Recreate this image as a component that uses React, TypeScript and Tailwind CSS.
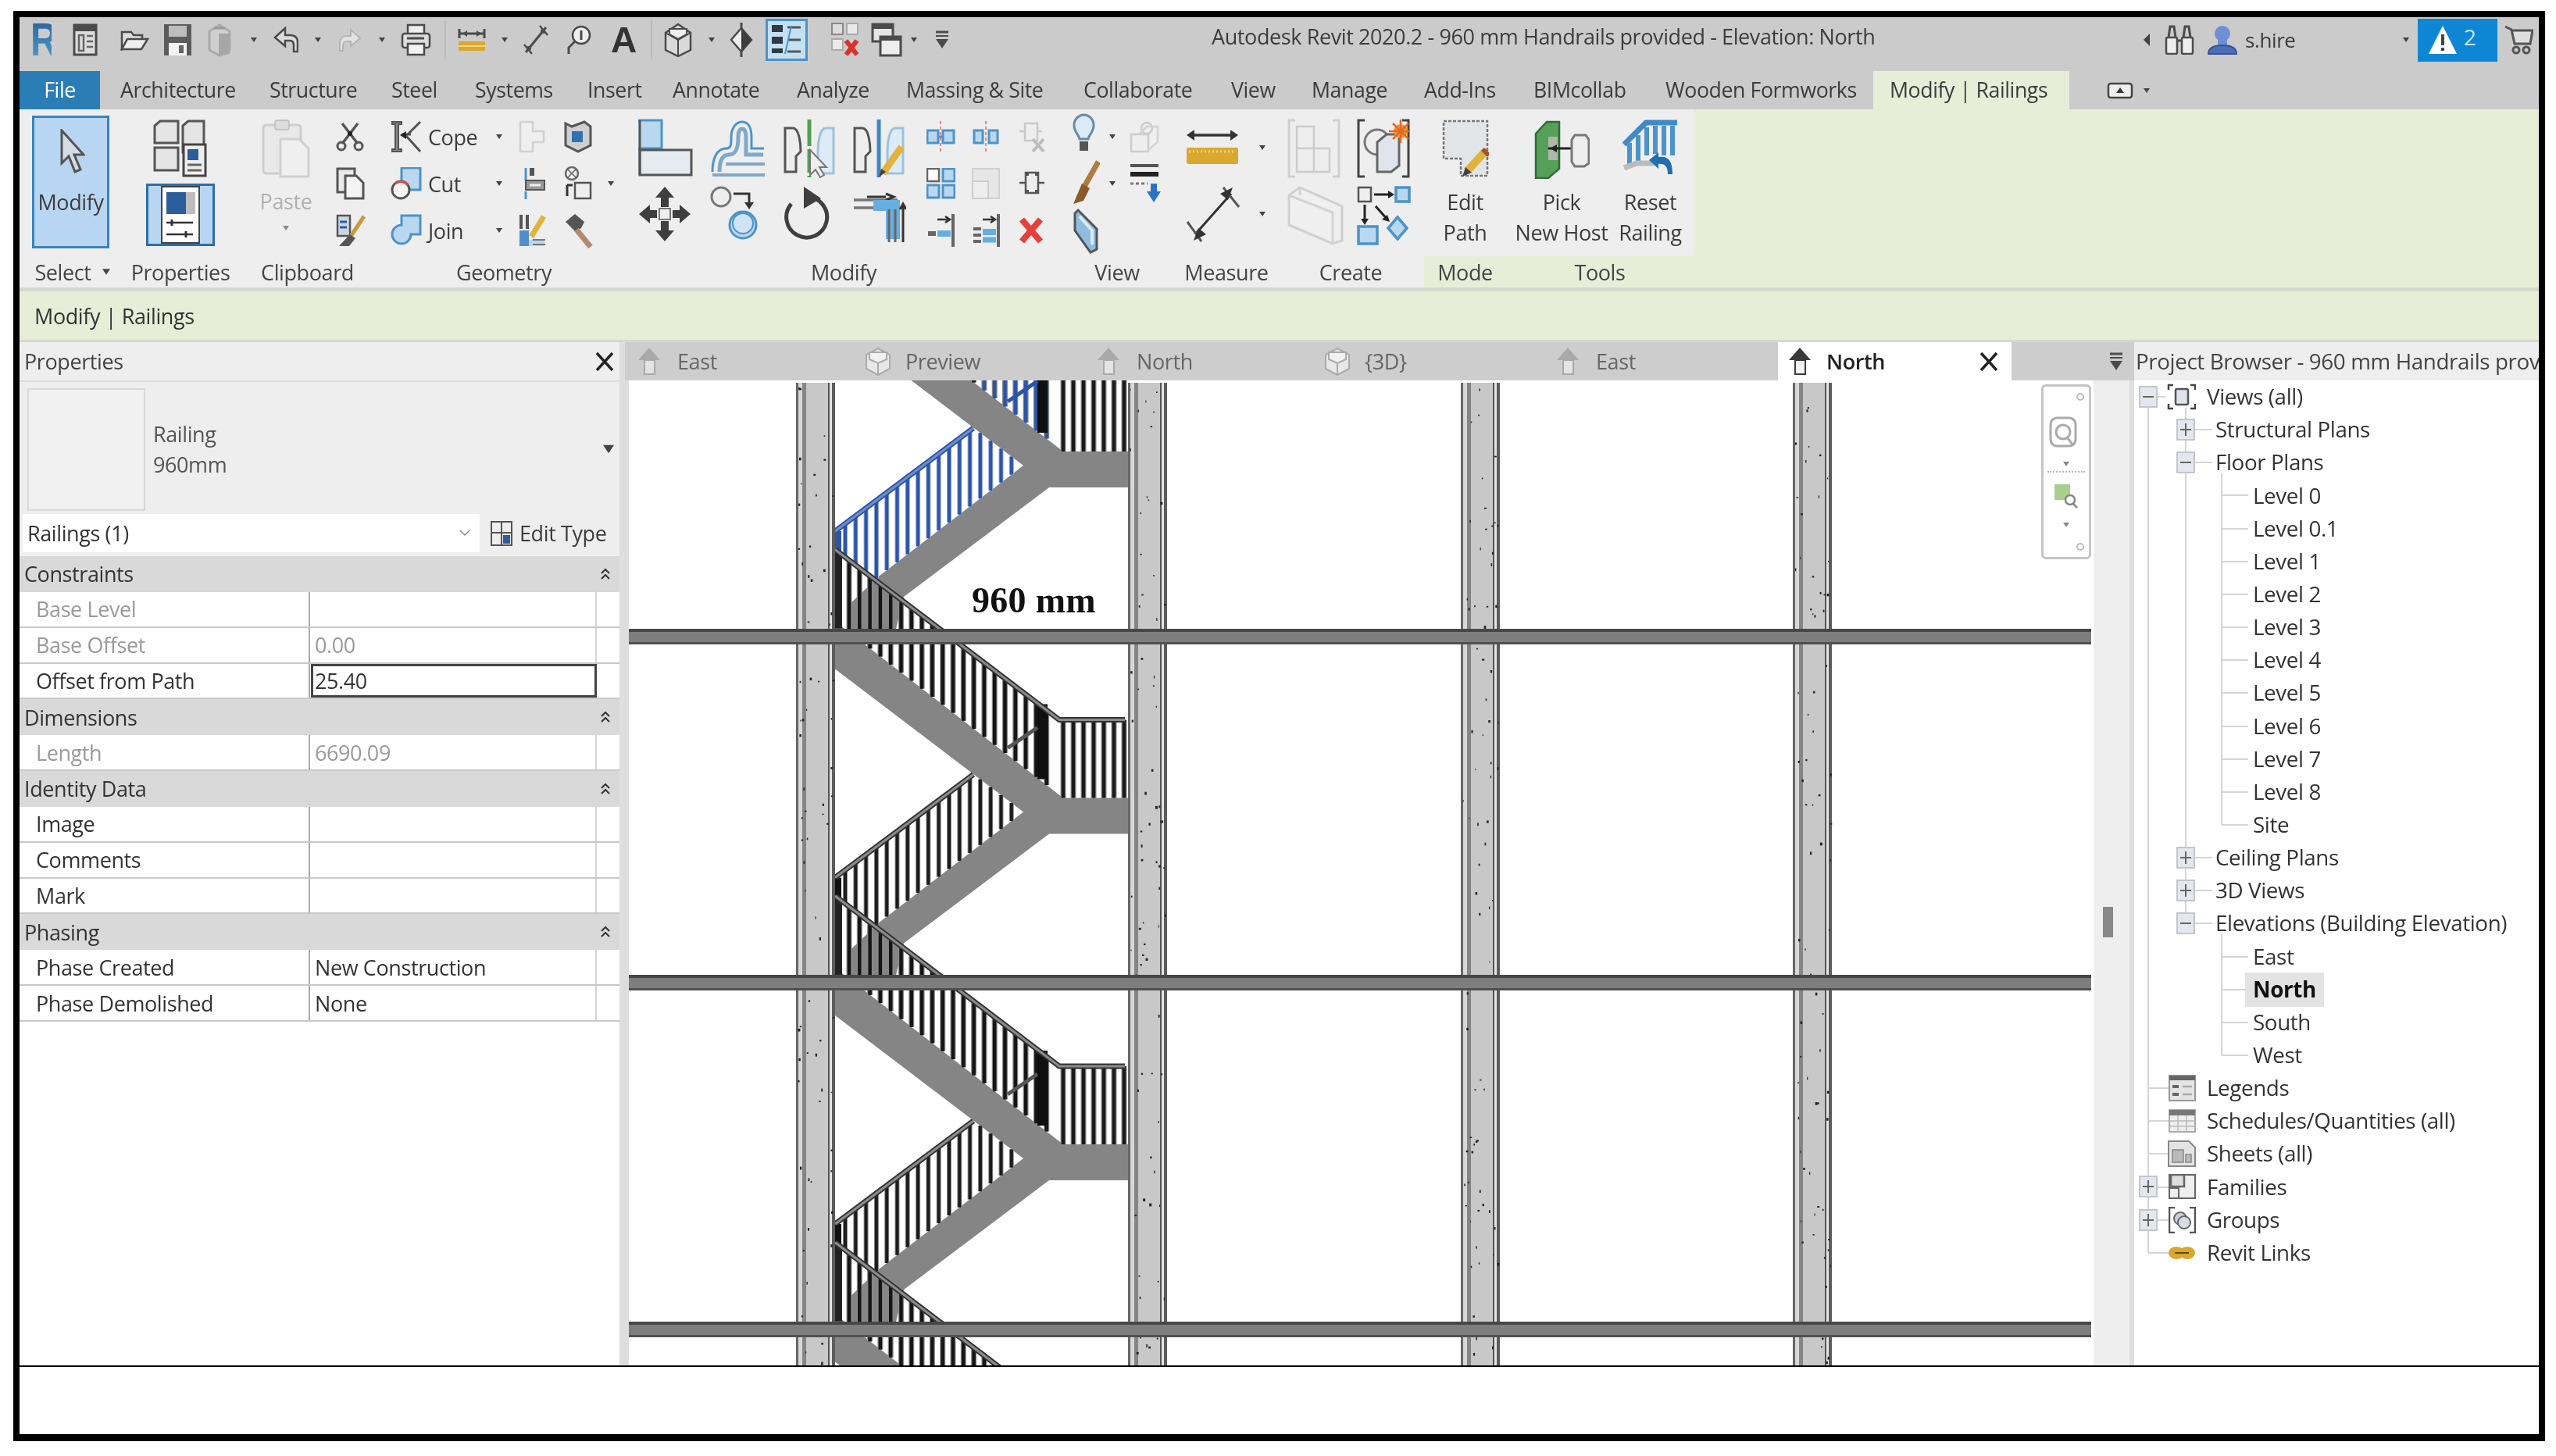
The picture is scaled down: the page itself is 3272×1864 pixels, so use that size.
import React from "react";

type P = { children?: React.ReactNode };
const Sv = ({ w, h, children }: P & { w: number; h: number }) => (
  <svg width={w} height={h} viewBox={`0 0 ${w} ${h}`} className="block shrink-0" fill="none">
    {children}
  </svg>
);
const D = "#4b4b4b";
const B = "#4c93c9";
const L = "#b9d8ef";

const Tri = ({ c = "#444", s = 8 }: { c?: string; s?: number }) => (
  <svg width={s} height={s - 2} viewBox="0 0 8 6" className="block shrink-0">
    <path d="M0 0H8L4 6Z" fill={c} />
  </svg>
);

/* quick access */
const QPanel = () => (<Sv w={32} h={42}><rect x="2" y="2" width="28" height="38" fill="#ddd" stroke={D} strokeWidth="3" /><rect x="2" y="2" width="28" height="8" fill={D} /><path d="M8 15h6v20H8zM18 16h8M18 23h8M18 30h8" stroke="#666" strokeWidth="2.5" /></Sv>);
const QFolder = () => (<Sv w={37} h={28}><path d="M2 4h12l3 4h11v6H9L2 26Z" fill="#ddd" stroke={D} strokeWidth="2.5" /><path d="M9 13h26l-8 13H2Z" fill="#eee" stroke={D} strokeWidth="2.5" /></Sv>);
const QSave = () => (<Sv w={37} h={42}><rect x="1" y="1" width="35" height="40" fill="#5c5c5c" /><rect x="7" y="3" width="23" height="14" fill="#bdbdbd" /><rect x="7" y="25" width="23" height="16" fill="#f2f2f2" /><rect x="20" y="28" width="6" height="10" fill="#666" /></Sv>);
const QSync = () => (<Sv w={34} h={44}><path d="M17 3l13 8v24l-13 7-13-7V11Z" fill="#cfcfcf" stroke="#aaa" strokeWidth="3" /><path d="M16 14h14v26l-14 3Z" fill="#a6a6a6" /><path d="M10 7h14" stroke="#999" strokeWidth="3" /></Sv>);
const QUndo = () => (<Sv w={32} h={34}><path d="M15 2L2 14l13 11v-7h6c4 0 5 3 5 6v8h5V20c0-6-4-9-10-9h-6Z" fill="#ddd" stroke={D} strokeWidth="2.5" /></Sv>);
const QRedo = () => (<Sv w={30} h={30}><path d="M16 2l12 11-12 10v-6h-5c-4 0-5 3-5 6v6H2V19c0-6 4-9 9-9h5Z" fill="#e2e2e2" stroke="#b5b5b5" strokeWidth="2" /></Sv>);
const QPrint = () => (<Sv w={39} h={42}><rect x="9" y="2" width="21" height="12" fill="#eee" stroke={D} strokeWidth="2.5" /><rect x="2" y="13" width="35" height="18" rx="3" fill="#ddd" stroke={D} strokeWidth="2.5" /><rect x="9" y="26" width="21" height="14" fill="#f3f3f3" stroke={D} strokeWidth="2.5" /><path d="M8 19h22" stroke={D} strokeWidth="3" /></Sv>);
const QDim = () => (<Sv w={36} h={32}><path d="M2 8h32M2 2v12M34 2v12" stroke={D} strokeWidth="3" /><path d="M6 8l6-4v8ZM30 8l-6-4v8Z" fill={D} /><rect x="1" y="18" width="34" height="12" fill="#d9a82e" /><path d="M1 24h34" stroke="#f3d77c" strokeWidth="2" /></Sv>);
const QAligned = () => (<Sv w={34} h={40}><path d="M4 36L30 4" stroke={D} strokeWidth="3" /><path d="M2 26l10 12M22 2l10 12" stroke={D} strokeWidth="2.5" /><circle cx="8" cy="31" r="3" fill={D} /><circle cx="26" cy="9" r="3" fill={D} /></Sv>);
const QTag = () => (<Sv w={34} h={40}><circle cx="20" cy="14" r="11" fill="#eee" stroke={D} strokeWidth="2.5" /><path d="M12 22L4 30v8" stroke={D} strokeWidth="3" /><path d="M20 8v12" stroke={D} strokeWidth="3" /></Sv>);
const QHouse = () => (<Sv w={39} h={44}><path d="M19 2l16 11v22l-16 8-16-8V13Z" fill="#d9d9d9" stroke={D} strokeWidth="2.5" /><path d="M3 13l16 9 16-9M19 22v20" stroke={D} strokeWidth="2" /><path d="M8 8h22v7l-11 6-11-6Z" fill="#eee" stroke={D} strokeWidth="2" /></Sv>);
const QDiamond = () => (<Sv w={29} h={46}><path d="M14 1v8M14 37v8" stroke={D} strokeWidth="3" /><path d="M14 8l13 15-13 15L1 23Z" fill="#eee" stroke={D} strokeWidth="2.5" /><path d="M14 8l13 15-13 15Z" fill="#3d3d3d" /></Sv>);
const QThin = () => (<div className="w-[54px] h-[54px] bg-[#c3e0f5] border-[3px] border-[#4c93c9] flex items-center justify-center"><Sv w={42} h={44}><path d="M2 3h14v9H2zM2 18h14v9H2zM2 33h14v6H2z" fill="#2e3a44" /><path d="M22 6h17M22 22h17M22 37h17" stroke="#555" strokeWidth="3" /><path d="M27 4L19 40" stroke={B} strokeWidth="2" /></Sv></div>);
const QSwitch = () => (<Sv w={37} h={46}><rect x="2" y="2" width="14" height="14" fill="#ddd" stroke="#888" strokeWidth="2" /><rect x="21" y="2" width="14" height="14" fill="#e9e9e9" stroke="#aaa" strokeWidth="2" /><rect x="2" y="22" width="14" height="14" fill="#e9e9e9" stroke="#aaa" strokeWidth="2" /><path d="M20 24l14 18M34 24L20 42" stroke="#d7322c" strokeWidth="6" /></Sv>);
const QWin = () => (<Sv w={40} h={44}><rect x="2" y="2" width="26" height="22" fill="#e6e6e6" stroke={D} strokeWidth="3" /><rect x="12" y="18" width="26" height="24" fill="#eee" stroke={D} strokeWidth="3" /><path d="M2 2h26v6H2zM12 18h26v5H12z" fill={D} /></Sv>);
const QCustom = () => (<Sv w={18} h={24}><path d="M1 2h16" stroke={D} strokeWidth="3" /><path d="M1 7h16" stroke={D} strokeWidth="2" /><path d="M1 11h16l-8 12Z" fill={D} /></Sv>);

/* ribbon */
const RCursor = () => (<Sv w={36} h={60}><path d="M6 2v42l9-9 8 20 7-3-8-19h12Z" fill="#d5dde4" stroke="#555" strokeWidth="3" /></Sv>);
const RFamily = () => (<Sv w={70} h={74}><path d="M2 8l7-6h23v28H9v0H2ZM38 8l7-6h20v40H38ZM2 36h30v29H2Z" fill="#e4e4e4" stroke="#555" strokeWidth="3" /><rect x="39" y="32" width="28" height="40" fill="#eee" stroke="#444" strokeWidth="3" /><rect x="44" y="38" width="14" height="14" fill="#2a5f9c" /><path d="M44 58h18M44 65h18" stroke="#666" strokeWidth="3" /></Sv>);
const RPanel = () => (<div className="w-[88px] h-[80px] bg-[#b8d6f1] border-[3px] border-[#2d6ea8] flex justify-center"><Sv w={50} h={74}><rect x="1" y="1" width="48" height="72" fill="#fff" stroke="#444" strokeWidth="2" /><rect x="7" y="8" width="25" height="28" fill="#2a5f9c" /><rect x="32" y="8" width="12" height="28" fill="#bdbdbd" /><path d="M7 47h34M7 62h34" stroke="#333" strokeWidth="2.5" /><path d="M14 43v8M32 58v8" stroke="#333" strokeWidth="3" /></Sv></div>);
const RPaste = () => (<Sv w={62} h={76}><rect x="2" y="8" width="48" height="62" rx="4" fill="#e8e8e8" stroke="#cdcdcd" strokeWidth="3" /><rect x="17" y="2" width="18" height="12" rx="3" fill="#ddd" stroke="#c4c4c4" strokeWidth="2" /><path d="M24 26h24l12 12v36H24Z" fill="#efefef" stroke="#cfcfcf" strokeWidth="3" /></Sv>);
const RScissor = () => (<Sv w={36} h={38}><path d="M8 2l20 26M28 2L8 28" stroke="#555" strokeWidth="3.5" /><circle cx="7" cy="31" r="5" stroke="#555" strokeWidth="3" /><circle cx="29" cy="31" r="5" stroke="#555" strokeWidth="3" /><circle cx="18" cy="15" r="3" fill="#222" /></Sv>);
const RCopy = () => (<Sv w={37} h={42}><rect x="2" y="2" width="22" height="30" fill="#e9e9e9" stroke="#555" strokeWidth="3" /><path d="M12 11h14l9 9v20H12Z" fill="#f3f3f3" stroke="#555" strokeWidth="3" /></Sv>);
const RBrush = () => (<Sv w={38} h={42}><rect x="2" y="2" width="16" height="26" fill="#ccd6e0" stroke="#555" strokeWidth="2.5" /><path d="M5 10h9M5 17h9" stroke="#2a5f9c" strokeWidth="3" /><path d="M36 3L18 30" stroke="#c89a3c" strokeWidth="5" /><path d="M18 26l7 5-8 10H4Z" fill="#555" /></Sv>);
const RCope = () => (<Sv w={40} h={42}><path d="M2 2h12v3H10v32h4v3H2v-3h4V5H2Z" fill="#888" stroke="#555" strokeWidth="2" /><path d="M38 2L20 20l18 20M26 18h-12" stroke="#555" strokeWidth="3" /><path d="M12 19l8-5v10Z" fill="#222" /></Sv>);
const RCut = () => (<Sv w={40} h={42}><rect x="14" y="1" width="24" height="28" fill={L} stroke={B} strokeWidth="3" /><circle cx="13" cy="29" r="11" fill="#f5f5f5" stroke="#555" strokeWidth="3" /><path d="M6 21a11 11 0 0 1 16 2" stroke="#e04a4a" strokeWidth="3" /></Sv>);
const RJoin = () => (<Sv w={40} h={42}><path d="M14 2h24v24H26a12 12 0 1 1-12-12Z" fill={L} stroke={B} strokeWidth="3" /></Sv>);
const RWallOff = () => (<Sv w={36} h={42}><path d="M2 2h16v12h14v14H18v12H2Z" fill="#efefef" stroke="#d0d0d0" strokeWidth="2.5" /></Sv>);
const RShield = () => (<Sv w={36} h={42}><path d="M2 4l8 4 16-6 8 6v24l-16 8-16-8Z" fill="#cfcfcf" stroke="#555" strokeWidth="3" /><rect x="10" y="14" width="14" height="14" fill="#2f72b4" /></Sv>);
const RSplit = () => (<Sv w={36} h={44}><path d="M9 2v16" stroke={B} strokeWidth="3" /><path d="M14 2h6v10h-6z" fill="#555" /><rect x="9" y="18" width="24" height="12" fill="#999" stroke="#555" strokeWidth="2" /><path d="M14 24h14" stroke="#eee" strokeWidth="3" /><path d="M9 32v10" stroke={B} strokeWidth="3" /></Sv>);
const RGears = () => (<Sv w={36} h={44}><circle cx="10" cy="9" r="8" fill="#eee" stroke="#666" strokeWidth="2.5" /><path d="M4 3l12 12M16 3L4 15" stroke="#666" strokeWidth="1.5" /><rect x="14" y="21" width="20" height="20" fill="#eee" stroke="#555" strokeWidth="2.5" /><path d="M4 24h7M4 24v14" stroke="#333" strokeWidth="3" /></Sv>);
const RPencilL = () => (<Sv w={36} h={44}><rect x="1" y="2" width="4" height="18" fill="#555" /><rect x="9" y="2" width="4" height="18" fill="#555" /><path d="M1 22h12v20H1Z" fill="#4f8ecb" /><path d="M13 34h20v8H13Z" fill={L} /><path d="M16 30L32 4" stroke="#e3b23c" strokeWidth="7" /><path d="M18 34h16M18 40h16" stroke="#555" strokeWidth="1.5" /></Sv>);
const RHammer = () => (<Sv w={38} h={46}><path d="M2 12l12-10 12 10-4 8-8 4Z" fill="#555" /><path d="M16 22l18 22" stroke="#b58a72" strokeWidth="7" /></Sv>);
const RAlign = () => (<Sv w={71} h={74}><rect x="-2" y="2" width="32" height="36" fill={L} stroke={B} strokeWidth="3" /><rect x="2" y="40" width="66" height="32" fill="#e4ecf2" stroke="#555" strokeWidth="3" /><path d="M2 2v70" stroke="#555" strokeWidth="3" /></Sv>);
const ROffset = () => (<Sv w={71} h={74}><path d="M3 68c0-18 6-30 18-30 6 0 6-6 6-14 0-12 6-20 14-20s12 8 12 20v14h16" stroke={B} strokeWidth="3" /><path d="M12 68c0-14 4-22 12-22 10 0 12-10 12-22 0-7 2-11 5-11s5 4 5 11v22h22" stroke="#7fa9c7" strokeWidth="5" /><path d="M20 58h50M3 72h67" stroke="#7fa9c7" strokeWidth="4" /></Sv>);
const Mirror = ({ c, pencil }: { c: string; pencil?: boolean }) => (<Sv w={68} h={76}>
  <path d="M2 12h10c8 0 10 20 10 30l-6 6v20H2Z" fill="#eee" stroke="#555" strokeWidth="3" />
  <path d="M64 12h-10c-8 0-10 20-10 30v28h20Z" fill="#dcebf5" stroke="#9dc2db" strokeWidth="3" />
  <path d="M33 1v74" stroke={c} strokeWidth="5" strokeDasharray={pencil ? "none" : "34 4 30 4"} />
  {pencil ? <><path d="M62 36L38 70" stroke="#e3b23c" strokeWidth="9" /><path d="M33 75l3-11 6 4Z" fill="#444" /></> : <path d="M34 40v32l7-7 6 10 5-3-6-10h9Z" fill="#eee" stroke="#777" strokeWidth="2" />}
</Sv>);
const RMove = () => (<Sv w={68} h={72}><path d="M34 1l12 14h-7v12h-10V15h-7ZM34 71l12-14h-7V45h-10v12h-7ZM1 36l14-12v7h9v10h-9v7ZM67 36l-14-12v7h-9v10h9v7Z" fill="#3f3f3f" /><rect x="27" y="29" width="14" height="14" fill="#eee" stroke="#777" strokeWidth="2" /></Sv>);
const RCopyMove = () => (<Sv w={66} h={72}><circle cx="14" cy="14" r="12" fill="#eee" stroke="#777" strokeWidth="3" /><path d="M30 10h20v14" stroke="#333" strokeWidth="3" /><path d="M50 30l-6-9h12Z" fill="#333" /><circle cx="42" cy="50" r="17" fill={L} stroke={B} strokeWidth="3" /><circle cx="42" cy="48" r="13" fill="#cfe3f3" stroke={B} strokeWidth="2" /></Sv>);
const RRotate = () => (<Sv w={60} h={72}><path d="M30 14a26 26 0 1 1-20 9" stroke="#3f3f3f" strokeWidth="5" /><path d="M26 1l22 15-22 13Z" fill="#3f3f3f" /></Sv>);
const RTrim = () => (<Sv w={68} h={72}><path d="M1 18h56M1 28h34" stroke="#777" strokeWidth="3.5" /><path d="M18 14h24M42 10l10 4-10 4" stroke="#333" strokeWidth="3" /><path d="M26 18h34v50h-18V32H26Z" fill="#66ade0" /><path d="M46 30v42M54 30v42" stroke="#666" strokeWidth="3" /><path d="M64 72V24M60 30l4-7 4 7" stroke="#333" strokeWidth="3" /></Sv>);
const RAlignSm = ({ pair }: { pair?: boolean }) => (<Sv w={37} h={42}><path d="M18 1v40" stroke="#e08a8a" strokeWidth="2" strokeDasharray="4 3" />{pair ? <><rect x="3" y="13" width="11" height="16" fill={L} stroke={B} strokeWidth="3" /><rect x="22" y="13" width="11" height="16" fill={L} stroke={B} strokeWidth="3" /></> : <><rect x="1" y="13" width="14" height="16" fill={L} stroke={B} strokeWidth="3" /><rect x="21" y="13" width="14" height="16" fill={L} stroke={B} strokeWidth="3" /><path d="M15 21h6" stroke={B} strokeWidth="3" /></>}</Sv>);
const RPinOff = () => (<Sv w={34} h={42}><path d="M8 4h16v22H8ZM1 14h7M24 14h6" stroke="#c9c9c9" strokeWidth="2.5" /><path d="M18 24l14 16M32 24L18 40" stroke="#bbb" strokeWidth="4" /></Sv>);
const RArray = () => (<Sv w={37} h={40}><rect x="1" y="1" width="15" height="16" fill="#fff" stroke="#666" strokeWidth="2.5" /><rect x="21" y="1" width="15" height="16" fill={L} stroke={B} strokeWidth="3" /><rect x="1" y="22" width="15" height="16" fill={L} stroke={B} strokeWidth="3" /><rect x="21" y="22" width="15" height="16" fill={L} stroke={B} strokeWidth="3" /></Sv>);
const RScaleOff = () => (<Sv w={36} h={40}><rect x="1" y="1" width="34" height="38" fill="#e6e6e6" stroke="#d0d0d0" strokeWidth="2" /><rect x="1" y="17" width="20" height="22" fill="#eee" stroke="#ccc" strokeWidth="2" /></Sv>);
const RPin = () => (<Sv w={34} h={36}><path d="M9 4h16v26H9Z" fill="#eee" stroke="#555" strokeWidth="2.5" /><path d="M1 17h8M25 17h8" stroke="#555" strokeWidth="2.5" /><path d="M9 4h4v4H9zM21 4h4v4h-4zM9 26h4v4H9zM21 26h4v4h-4z" fill="#555" /></Sv>);
const RTrimSm = ({ n }: { n: number }) => (<Sv w={37} h={44}><path d="M34 1v42" stroke="#666" strokeWidth="4" /><path d="M14 8h14M24 4l6 4-6 4" stroke="#333" strokeWidth="2.5" />{n === 1 ? <><path d="M2 26h10" stroke="#666" strokeWidth="6" /><path d="M14 26h17" stroke="#66ade0" strokeWidth="8" /></> : <><path d="M2 20h10M2 28h10M2 36h10" stroke="#666" strokeWidth="4" /><path d="M14 24h17" stroke="#66ade0" strokeWidth="8" /><path d="M14 34h17" stroke="#66ade0" strokeWidth="7" /></>}</Sv>);
const RDelete = () => (<Sv w={32} h={36}><path d="M4 4l24 28M28 4L4 32" stroke="#e2413c" strokeWidth="8" /></Sv>);
const RBulb = () => (<Sv w={31} h={60}><path d="M15 2a13 13 0 0 1 13 14c0 8-6 11-7 17H10c-1-6-7-9-7-17A13 13 0 0 1 15 2Z" fill="#dbeaf5" stroke="#6b8aa3" strokeWidth="3" /><rect x="10" y="36" width="11" height="12" fill="#555" /></Sv>);
const RHideOff = () => (<Sv w={40} h={42}><rect x="2" y="18" width="22" height="22" fill="#eee" stroke="#ccc" strokeWidth="2.5" /><circle cx="22" cy="10" r="7" fill="#eee" stroke="#ccc" strokeWidth="2.5" /><path d="M12 18l10-10h14v20l-12 10" stroke="#d3d3d3" strokeWidth="2.5" /></Sv>);
const RPaint = () => (<Sv w={36} h={60}><path d="M34 2L16 34" stroke="#b07b3e" strokeWidth="7" /><path d="M13 30l10 6-8 16-13 4Z" fill="#8a5a2a" /></Sv>);
const RLines = () => (<Sv w={40} h={52}><path d="M1 3h36" stroke="#555" strokeWidth="4" /><path d="M1 14h36" stroke="#222" strokeWidth="6" /><path d="M1 26h22" stroke="#777" strokeWidth="3" strokeDasharray="4 3" /><path d="M27 26h8v10h5L31 50 22 36h5Z" fill="#2c73c4" /></Sv>);
const RCopyM = () => (<Sv w={36} h={60}><path d="M8 4l24 24v26l-8 4L4 30V8Z" fill="#8fbde2" stroke="#555" strokeWidth="3" /><path d="M10 12l16 18v18" stroke="#dceaf6" strokeWidth="4" /></Sv>);
const RMeasure = () => (<Sv w={68} h={44}><path d="M4 6h60" stroke="#333" strokeWidth="3.5" /><path d="M1 6l10-7v14ZM67 6l-10-7v14Z" fill="#333" /><rect x="1" y="22" width="66" height="21" rx="2" fill="#d9a82e" /><path d="M4 27h60" stroke="#f3d77c" strokeWidth="3" strokeDasharray="2 3" /></Sv>);
const RMeasure2 = () => (<Sv w={70} h={72}><path d="M12 62L58 10" stroke="#333" strokeWidth="3" /><path d="M2 46l18 25M48 2l20 25" stroke="#555" strokeWidth="3" /><path d="M16 54l-6 16 16-8ZM54 18l6-16-16 8Z" fill="#333" /></Sv>);
const RBracketOff = () => (<Sv w={68} h={76}><path d="M10 2H2v72h8M58 2h8v72h-8" stroke="#cfcfcf" strokeWidth="3" /><path d="M12 10h22v28h20v30H12Z" fill="#eee" stroke="#ccc" strokeWidth="2.5" /><path d="M12 38h22v30" stroke="#ccc" strokeWidth="2.5" /></Sv>);
const RBracket = () => (<Sv w={68} h={76}><path d="M10 2H2v72h8M58 2h8v72h-8" stroke="#444" strokeWidth="3" /><circle cx="26" cy="30" r="16" fill="#eee" stroke="#777" strokeWidth="3" /><path d="M26 30l12-10h16v40l-10 8H26Z" fill="#dfe5ea" stroke="#666" strokeWidth="3" /><circle cx="56" cy="16" r="9" fill="#f39a1f" /><path d="M56 1v30M41 16h30M46 6l20 20M66 6L46 26" stroke="#e4682a" strokeWidth="2.5" /></Sv>);
const RFormOff = () => (<Sv w={72} h={76}><path d="M16 2l54 24v44l-12 4L2 50V12Z" fill="#efefef" stroke="#cfcfcf" strokeWidth="3" /><path d="M2 12l56 22v40M16 2v10" stroke="#d3d3d3" strokeWidth="3" /></Sv>);
const RFlow = () => (<Sv w={70} h={76}><rect x="2" y="2" width="16" height="18" fill="#eee" stroke="#555" strokeWidth="2.5" /><rect x="50" y="2" width="17" height="18" fill={L} stroke={B} strokeWidth="3.5" /><rect x="2" y="52" width="24" height="22" fill={L} stroke={B} strokeWidth="3.5" /><path d="M52 40l12 14-12 14-12-14Z" fill={L} stroke={B} strokeWidth="3.5" /><path d="M22 11h22M10 24v22M24 26l16 18" stroke="#222" strokeWidth="3" /><path d="M48 11l-8-5v10ZM10 50l-5-8h10ZM42 46l-3-9-7 6Z" fill="#222" /></Sv>);
const REdit = () => (<Sv w={60} h={74}><path d="M2 2h56v70H24V50H2Z" fill="#e2e5e8" stroke="#777" strokeWidth="2.5" strokeDasharray="4 2" /><path d="M56 40L32 66" stroke="#e3b23c" strokeWidth="10" /><path d="M54 36l8 8-4 4-8-8Z" fill="#a0522d" /><path d="M26 73l4-12 8 7Z" fill="#444" /></Sv>);
const RPick = () => (<Sv w={71} h={76}><path d="M2 18L16 3h16v60L18 75H2Z" fill="#57a05a" stroke="#2f6d36" strokeWidth="2.5" /><rect x="18" y="22" width="12" height="30" fill="#aeb7a8" /><path d="M18 37h30" stroke="#222" strokeWidth="3" /><path d="M20 37l9-5v10Z" fill="#222" /><path d="M52 20h14l4 6v30l-6 4H52l-4-6V26Z" fill="#eee" stroke="#777" strokeWidth="3" /></Sv>);
const RReset = () => (<Sv w={71} h={76}><path d="M2 32L30 4h40" stroke="#3f8acb" strokeWidth="7" /><path d="M9 30v30M20 20v34M31 10v36M42 8v36M53 8v38M64 8v38" stroke="#4c93c9" strokeWidth="6" /><path d="M2 62l16-6h20l10-4" stroke="#bbb" strokeWidth="7" /><path d="M34 52l12-10v6c12-2 18 4 18 22h-6c0-10-4-14-12-13v6Z" fill="#1f6fb2" /></Sv>);

/* panels */
const Elev = ({ dark }: { dark?: boolean }) => (<Sv w={35} h={38}><path d="M17 1l14 16h-7v19H10V17H3Z" fill={dark ? "#3a3a3a" : "#a9a9a9"} /><rect x="11" y="17" width="13" height="18" fill={dark ? "#f5f5f5" : "#e4e4e4"} stroke={dark ? "#3a3a3a" : "#a9a9a9"} strokeWidth="2" /></Sv>);
const Cube = () => (<Sv w={33} h={36}><path d="M16 1l15 8v18l-15 8-15-8V9Z" fill="#e8e8e8" stroke="#aaa" strokeWidth="2" /><path d="M5 6h22v9l-11 5-11-5ZM16 20v14" fill="#f1f1f1" stroke="#aaa" strokeWidth="2" /></Sv>);
const Exp = ({ open }: { open?: boolean }) => (<div className="w-[24px] h-[28px] bg-[#e4e8ee] border-2 border-[#c2c6cc] flex items-center justify-center relative"><span className="block w-[14px] h-[2px] bg-[#666]" />{!open && <span className="absolute block w-[2px] h-[16px] bg-[#666]" />}</div>);
const TViews = () => (<Sv w={37} h={38}><path d="M2 10V4h6M30 4h6v6M2 28v6h6M36 28v6h-6" stroke="#444" strokeWidth="2.5" /><rect x="11" y="9" width="16" height="20" rx="2" fill="#dde3e8" stroke="#555" strokeWidth="2.5" /></Sv>);
const TLegend = () => (<Sv w={35} h={34}><rect x="1" y="1" width="33" height="32" fill="#e4e4e4" stroke="#999" strokeWidth="2" /><rect x="1" y="1" width="33" height="6" fill="#666" /><path d="M5 13h8v4H5zM5 23h8v4H5z" fill="#666" /><path d="M18 15h12M18 25h12" stroke="#aaa" strokeWidth="2.5" /></Sv>);
const TSched = () => (<Sv w={35} h={30}><rect x="1" y="1" width="33" height="28" fill="#eee" stroke="#aaa" strokeWidth="2" /><rect x="1" y="1" width="33" height="7" fill="#777" /><path d="M1 15h33M1 22h33M12 8v21M23 8v21" stroke="#bbb" strokeWidth="1.5" /></Sv>);
const TSheet = () => (<Sv w={36} h={34}><path d="M1 1h26l8 8v24H1Z" fill="#e4e4e4" stroke="#888" strokeWidth="2" /><path d="M6 12h14v16H6ZM23 18h7v10h-7Z" fill="#bbb" stroke="#888" strokeWidth="1.5" /></Sv>);
const TFam = () => (<Sv w={35} h={32}><rect x="1" y="1" width="33" height="30" fill="#eee" stroke="#666" strokeWidth="2" /><rect x="3" y="1" width="17" height="15" fill="#ddd" stroke="#666" strokeWidth="2.5" /><path d="M1 18h12v13" stroke="#666" strokeWidth="2" /></Sv>);
const TGroup = () => (<Sv w={35} h={34}><path d="M8 1H1v32h7M27 1h7v32h-7" stroke="#555" strokeWidth="2.5" /><circle cx="15" cy="15" r="8" fill="#c9d2da" stroke="#666" strokeWidth="2" /><circle cx="20" cy="20" r="8" fill="#d7dde3" stroke="#666" strokeWidth="2" /></Sv>);
const TLink = () => (<Sv w={36} h={18}><ellipse cx="11" cy="9" rx="10" ry="8" fill="#d9a82e" /><ellipse cx="25" cy="9" rx="10" ry="8" fill="#d9a82e" /><path d="M9 9h18" stroke="#5c4a12" strokeWidth="2" /></Sv>);

/* elevation drawing */
const BEAMS = [805, 1248, 1692];
const PERIOD = 443.5;
const range = (a: number, b: number, s: number) => { const r: number[] = []; for (let x = a; x <= b; x += s) r.push(x); return r; };
const topEdge = (x: number) => 1268 + (x - 1106) * (197 / 255);
const r2Rail = (x: number) => (x <= 1356 ? 1147 + (x - 1069) * (218 / 287) : 1365);
const aLow = (x: number) => 1300 + (x - 1069) * (183 / 241);
const bTop = (x: number) => 1624 + (x - 1126) * (-141 / 184);
const r1Rail = (x: number) => 1567 + (x - 1069) * (-132 / 177);
const BAND = "1069,1239 1361,1465 1444,1465 1444,1511 1343,1511 1157,1651 1147,1692 1086,1692 1086,1662 1126,1624 1310,1483 1069,1300";
const PERIODS = [-3, -2, -1, 0, 1];
const dots = (x0: number, x1: number, seed: number) => {
  const o: { x: number; y: number; w: number; h: number }[] = [];
  let s = seed;
  const rnd = () => { s = (s * 16807) % 2147483647; return s / 2147483647; };
  for (let i = 0; i < 75; i++) o.push({ x: x0 + rnd() * (x1 - x0), y: 490 + rnd() * 1258, w: 1 + rnd() * 2, h: 1.5 + rnd() * 2.5 });
  return o;
};
const COLS = [1019, 1444, 1870, 2295];

function Drawing() {
  return (
    <svg width={1875} height={1261} viewBox="805 487 1875 1261" className="block shrink-0">
      <rect x="805" y="487" width="1875" height="1261" fill="#fff" />
      {PERIODS.map((k) => (
        <g key={k} transform={`translate(0 ${k * PERIOD})`}>
          <polygon points={BAND} fill="#858585" />
        </g>
      ))}
      {PERIODS.map((k) => {
        const blue = k === -2;
        const c1 = blue ? "#2c55a8" : "#1c1c1c";
        return (
          <g key={`r${k}`} transform={`translate(0 ${k * PERIOD})`}>
            <rect x="1069" y="1567" width="8" height="40" fill={blue ? "#2c55a8" : "#111"} />
            {range(1082, 1305, 13.3).map((x) => {
              const y1 = Math.max(r1Rail(x), aLow(x));
              const y2 = Math.min(bTop(x), r2Rail(x) + PERIOD);
              return y2 > y1 ? (
                <g key={x}>
                  <line x1={x} x2={x} y1={y1} y2={y2} stroke={blue ? "#8ea4d6" : "#8a8a8a"} strokeWidth="6" />
                  <line x1={x} x2={x} y1={y1} y2={y2} stroke={c1} strokeWidth="4" />
                </g>
              ) : null;
            })}
            <line x1="1069" y1="1567" x2="1246" y2="1435" stroke={blue ? "#2c55a8" : "#333"} strokeWidth="7" />
            <line x1="1069" y1="1567" x2="1246" y2="1435" stroke={blue ? "#6f8ccb" : "#8c8c8c"} strokeWidth="3" />
          </g>
        );
      })}
      {PERIODS.map((k) => (
        <g key={`s${k}`} transform={`translate(0 ${k * PERIOD})`}>
          <rect x="1069" y="1150" width="9" height="98" fill="#222" />
          {range(1087, 1350, 13.3).map((x) => {
            const y2 = Math.max(topEdge(x), r2Rail(x));
            const b = k === -2 && x > 1255;
            return (
              <g key={x}>
                <line x1={x} x2={x} y1={r2Rail(x)} y2={y2} stroke="#8a8a8a" strokeWidth="7" />
                <line x1={x} x2={x} y1={r2Rail(x)} y2={y2} stroke={b ? "#2c55a8" : "#151515"} strokeWidth="4.5" />
              </g>
            );
          })}
          {range(1361, 1440, 13).map((x) => (
            <g key={x}>
              <line x1={x} x2={x} y1="1365" y2="1465" stroke="#8a8a8a" strokeWidth="7" />
              <line x1={x} x2={x} y1="1365" y2="1465" stroke="#1a1a1a" strokeWidth="4.5" />
            </g>
          ))}
          <rect x="1328" y="1345" width="13" height="96" fill="#0f0f0f" />
          <line x1="1290" y1="1401" x2="1328" y2="1375" stroke={k === -2 ? "#2c55a8" : "#555"} strokeWidth="5" />
          <polyline points="1069,1147 1356,1365 1440,1365" stroke="#333" strokeWidth="7" fill="none" />
          <polyline points="1069,1147 1356,1365 1440,1365" stroke="#8c8c8c" strokeWidth="3" fill="none" />
        </g>
      ))}
      {COLS.map((x, i) => (
        <g key={x}>
          <rect x={x} y="490" width="50" height="1258" fill="#c8c8c8" />
          <rect x={x} y="490" width="3" height="1258" fill="#666" />
          <rect x={x + 3} y="490" width="5" height="1258" fill="#d8d8d8" />
          <rect x={x + 8} y="490" width="5" height="1258" fill="#858585" />
          <rect x={x + 41} y="490" width="2" height="1258" fill="#555" />
          <rect x={x + 43} y="490" width="3" height="1258" fill="#e4e4e4" />
          <rect x={x + 46} y="490" width="4" height="1258" fill="#5c5c5c" />
          {dots(x + 2, x + 48, 7331 + i * 4219).map((d, j) => (
            <rect key={j} x={d.x} y={d.y} width={d.w} height={d.h} fill="#222" />
          ))}
        </g>
      ))}
      {BEAMS.map((y) => (
        <g key={y}>
          <rect x="805" y={y} width="1872" height="20" fill="#7e7e7e" />
          <rect x="805" y={y} width="1872" height="4" fill="#474747" />
          <rect x="805" y={y + 17} width="1872" height="3" fill="#505050" />
        </g>
      ))}
    </svg>
  );
}

/* data */
const TABS = [
  { t: "Architecture", c: "w-[191px]" }, { t: "Structure", c: "w-[156px]" }, { t: "Steel", c: "w-[107px]" },
  { t: "Systems", c: "w-[144px]" }, { t: "Insert", c: "w-[109px]" }, { t: "Annotate", c: "w-[159px]" },
  { t: "Analyze", c: "w-[140px]" }, { t: "Massing & Site", c: "w-[227px]" }, { t: "Collaborate", c: "w-[189px]" },
  { t: "View", c: "w-[103px]" }, { t: "Manage", c: "w-[144px]" }, { t: "Add-Ins", c: "w-[140px]" },
  { t: "BIMcollab", c: "w-[169px]" }, { t: "Wooden Formworks", c: "w-[266px]" },
];
type Row = { l: string; v?: string; dim?: boolean; focus?: boolean } | { h: string };
const PROPS: Row[] = [
  { h: "Constraints" }, { l: "Base Level", dim: true }, { l: "Base Offset", v: "0.00", dim: true }, { l: "Offset from Path", v: "25.40", focus: true },
  { h: "Dimensions" }, { l: "Length", v: "6690.09", dim: true },
  { h: "Identity Data" }, { l: "Image" }, { l: "Comments" }, { l: "Mark" },
  { h: "Phasing" }, { l: "Phase Created", v: "New Construction" }, { l: "Phase Demolished", v: "None" },
];
const VTABS = [
  { t: "East", home: true }, { t: "Preview", home: false }, { t: "North", home: true }, { t: "{3D}", home: false }, { t: "East", home: true },
];
type T = { t: string; lv: 0 | 1 | 2; exp?: "+" | "-"; icon?: React.ReactNode; bold?: boolean };
const TREE: T[] = [
  { t: "Views (all)", lv: 0, exp: "-", icon: <TViews /> },
  { t: "Structural Plans", lv: 1, exp: "+" }, { t: "Floor Plans", lv: 1, exp: "-" },
  ...["Level 0", "Level 0.1", "Level 1", "Level 2", "Level 3", "Level 4", "Level 5", "Level 6", "Level 7", "Level 8", "Site"].map((t) => ({ t, lv: 2 as const })),
  { t: "Ceiling Plans", lv: 1, exp: "+" }, { t: "3D Views", lv: 1, exp: "+" }, { t: "Elevations (Building Elevation)", lv: 1, exp: "-" },
  { t: "East", lv: 2 }, { t: "North", lv: 2, bold: true }, { t: "South", lv: 2 }, { t: "West", lv: 2 },
  { t: "Legends", lv: 0, icon: <TLegend /> }, { t: "Schedules/Quantities (all)", lv: 0, icon: <TSched /> }, { t: "Sheets (all)", lv: 0, icon: <TSheet /> },
  { t: "Families", lv: 0, exp: "+", icon: <TFam /> }, { t: "Groups", lv: 0, exp: "+", icon: <TGroup /> }, { t: "Revit Links", lv: 0, icon: <TLink /> },
];
const rowY = (n: number) => Math.round(21 + 42.15 * n);
const TREE_LINES = [
  `M18 35V${rowY(26)}`,
  `M66 35V${rowY(16)}`,
  `M112 119V${rowY(13)}`,
  `M112 ${rowY(16) + 14}V${rowY(20)}`,
  "M30 21H40",
  ...[1, 2, 14, 15, 16].map((n) => `M78 ${rowY(n)}H100`),
  ...[3, 4, 5, 6, 7, 8, 9, 10, 11, 12, 13, 17, 18, 19, 20].map((n) => `M112 ${rowY(n)}H146`),
  ...[21, 22, 23, 26].map((n) => `M18 ${rowY(n)}H46`),
  ...[24, 25].map((n) => `M30 ${rowY(n)}H46`),
].join("");

const GroupLabel = ({ children, green }: P & { green?: boolean }) => (
  <div className={`h-[40px] flex items-center justify-center gap-[14px] text-[#444] ${green ? "bg-[#e6eed8]" : ""}`}>{children}</div>
);

const Three = ({ a, b, c, cls = "" }: { a: React.ReactNode; b: React.ReactNode; c: React.ReactNode; cls?: string }) => (
  <div className={`flex flex-col pt-[5px] ${cls}`}>
    <div className="h-[60px] flex items-center">{a}</div>
    <div className="h-[60px] flex items-center">{b}</div>
    <div className="h-[60px] flex items-center">{c}</div>
  </div>
);

export default function App() {
  return (
    <div className="w-[3272px] h-[1864px] bg-white pl-[17px] pr-[14px] pt-[14px] pb-[19px] overflow-hidden text-[27px] leading-none tracking-[-0.4px] text-[#3c3c3c] font-['Open_Sans',sans-serif] blur-[0.6px]">
      <div className="h-full border-black border-t-[8px] border-l-[8px] border-r-[8px] border-b-[9px] bg-white flex flex-col">
        {/* quick access + title */}
        <div className="h-[69px] bg-[#cbcbcb] flex items-center pb-[11px]">
          <span className="ml-[14px] w-[34px] text-[60px] font-bold font-['Liberation_Sans',sans-serif] leading-none tracking-normal scale-x-[0.8] origin-left text-transparent bg-clip-text bg-gradient-to-b from-[#1f5f96] to-[#5aa0d0]">R</span>
          <span className="ml-[20px]"><QPanel /></span>
          <span className="ml-[29px]"><QFolder /></span>
          <span className="ml-[18px]"><QSave /></span>
          <span className="ml-[18px]"><QSync /></span>
          <span className="ml-[23px]"><Tri /></span>
          <span className="ml-[21px]"><QUndo /></span>
          <span className="ml-[21px]"><Tri /></span>
          <span className="ml-[22px]"><QRedo /></span>
          <span className="ml-[22px]"><Tri /></span>
          <span className="ml-[20px]"><QPrint /></span>
          <span className="ml-[17px] w-[2px] h-[50px] bg-[#bbb]" />
          <span className="ml-[15px]"><QDim /></span>
          <span className="ml-[20px]"><Tri /></span>
          <span className="ml-[19px]"><QAligned /></span>
          <span className="ml-[21px]"><QTag /></span>
          <span className="ml-[24px] w-[29px] text-[46px] font-bold text-[#333] font-['Liberation_Sans',sans-serif] leading-none tracking-normal">A</span>
          <span className="ml-[22px] w-[2px] h-[50px] bg-[#bbb]" />
          <span className="ml-[14px]"><QHouse /></span>
          <span className="ml-[19px]"><Tri /></span>
          <span className="ml-[20px]"><QDiamond /></span>
          <span className="ml-[16px]"><QThin /></span>
          <span className="ml-[29px]"><QSwitch /></span>
          <span className="ml-[15px]"><QWin /></span>
          <span className="ml-[11px]"><Tri /></span>
          <span className="ml-[23px]"><QCustom /></span>
          <span className="ml-[336px] whitespace-nowrap pb-[9px]">Autodesk Revit 2020.2 - 960 mm Handrails provided - Elevation: North</span>
          <div className="ml-auto flex items-center">
            <svg width="8" height="16" viewBox="0 0 8 16" className="block"><path d="M8 0V16L0 8Z" fill="#444" /></svg>
            <span className="ml-[19px]">
              <Sv w={38} h={38}><rect x="2" y="16" width="14" height="21" rx="2" fill="#eee" stroke={D} strokeWidth="2.5" /><rect x="22" y="16" width="14" height="21" rx="2" fill="#eee" stroke={D} strokeWidth="2.5" /><path d="M5 16l2-14h5l2 14M24 16l2-14h5l2 14M16 20h6" stroke={D} strokeWidth="3" /></Sv>
            </span>
            <span className="ml-[16px]">
              <Sv w={40} h={38}><circle cx="20" cy="11" r="10" fill="#6d8fd4" /><path d="M14 18h12v8H14Z" fill="#6d8fd4" /><path d="M2 37c0-8 8-11 18-11s18 3 18 11Z" fill="#4a6fb8" stroke="#35528f" strokeWidth="2" /></Sv>
            </span>
            <span className="ml-[9px] w-[202px] text-[26px]">s.hire</span>
            <Tri />
            <span className="ml-[11px] w-[102px] h-[55px] bg-[#0e86d4] flex items-center text-[#c4e8ff] text-[28px]">
              <span className="ml-[13px]"><Sv w={38} h={38}><path d="M19 1l18 36H1Z" fill="#fff" /><path d="M19 12v14M19 29v4" stroke="#444" strokeWidth="4" /></Sv></span>
              <span className="ml-[8px] pb-[8px]">2</span>
            </span>
            <span className="ml-[9px] mr-[7px]">
              <Sv w={37} h={38}><path d="M1 2l8 4 4 18h20l3-17H9" fill="#dedede" stroke="#555" strokeWidth="3" /><circle cx="15" cy="32" r="4" stroke="#555" strokeWidth="3" /><circle cx="28" cy="32" r="4" stroke="#555" strokeWidth="3" /></Sv>
            </span>
          </div>
        </div>

        {/* ribbon tabs */}
        <div className="h-[49px] bg-[#cbcbcb] flex items-stretch text-[26.7px]">
          <div className="w-[103px] bg-[#2b7db5] text-white flex items-center justify-center">File</div>
          <div className="ml-[26px] flex items-center whitespace-nowrap">
            {TABS.map((x) => (<div key={x.t} className={x.c}>{x.t}</div>))}
          </div>
          <div className="w-[251px] bg-[#e6eed8] flex items-center pl-[21px] whitespace-nowrap">Modify | Railings</div>
          <div className="ml-[48px] flex items-center gap-[13px]">
            <Sv w={34} h={22}><rect x="2" y="2" width="30" height="18" rx="3" fill="#eee" stroke="#444" strokeWidth="2.5" /><path d="M17 7l5 7H12Z" fill="#333" /></Sv>
            <Tri />
          </div>
        </div>

        {/* ribbon */}
        <div className="h-[228px] flex bg-[#e6eed8]">
          <div className="w-[135px] bg-[#eeeeee] flex flex-col">
            <div className="h-[188px] pl-[16px] pt-[8px]">
              <div className="w-[99px] h-[170px] bg-[#b8d6f1] border-[3px] border-[#3a83bf] flex flex-col items-center pt-[14px]">
                <RCursor />
                <span className="mt-[20px]">Modify</span>
              </div>
            </div>
            <GroupLabel><span>Select</span><Tri s={10} /></GroupLabel>
          </div>
          <div className="w-[142px] bg-[#eeeeee] flex flex-col">
            <div className="h-[188px] flex flex-col items-center pt-[13px] gap-[8px]"><RFamily /><RPanel /></div>
            <GroupLabel>Properties</GroupLabel>
          </div>
          <div className="w-[183px] bg-[#eeeeee] flex flex-col">
            <div className="h-[188px] flex pl-[33px]">
              <div className="w-[62px] flex flex-col items-center pt-[12px] text-[#b0b0b0]">
                <RPaste />
                <span className="mt-[16px]">Paste</span>
                <span className="mt-[18px]"><Tri c="#888" /></span>
              </div>
              <Three cls="ml-[33px]" a={<RScissor />} b={<RCopy />} c={<RBrush />} />
            </div>
            <GroupLabel>Clipboard</GroupLabel>
          </div>
          <div className="w-[320px] bg-[#eeeeee] flex flex-col">
            <div className="h-[188px] pl-[15px] pt-[5px] flex flex-col">
              <div className="h-[60px] flex items-center">
                <RCope /><span className="ml-[8px] w-[87px]">Cope</span><Tri /><span className="ml-[21px]"><RWallOff /></span><span className="ml-[22px]"><RShield /></span>
              </div>
              <div className="h-[60px] flex items-center">
                <RCut /><span className="ml-[8px] w-[87px]">Cut</span><Tri /><span className="ml-[21px]"><RSplit /></span><span className="ml-[22px]"><RGears /></span><span className="ml-[20px]"><Tri /></span>
              </div>
              <div className="h-[60px] flex items-center">
                <RJoin /><span className="ml-[8px] w-[87px]">Join</span><Tri /><span className="ml-[21px]"><RPencilL /></span><span className="ml-[22px]"><RHammer /></span>
              </div>
            </div>
            <GroupLabel>Geometry</GroupLabel>
          </div>
          <div className="w-[550px] bg-[#eeeeee] flex flex-col">
            <div className="h-[188px] flex pl-[12px]">
              <div className="w-[369px] pt-[12px] grid grid-cols-[92px_94px_89px_94px] grid-rows-[86px_75px]">
                <RAlign /><ROffset /><Mirror c="#4ea24e" /><Mirror c="#3d85c6" pencil />
                <RMove /><RCopyMove /><RRotate /><RTrim />
              </div>
              <Three cls="w-[58px]" a={<RAlignSm />} b={<RArray />} c={<RTrimSm n={1} />} />
              <Three cls="w-[60px]" a={<RAlignSm pair />} b={<RScaleOff />} c={<RTrimSm n={2} />} />
              <Three a={<RPinOff />} b={<RPin />} c={<RDelete />} />
            </div>
            <GroupLabel>Modify</GroupLabel>
          </div>
          <div className="w-[150px] bg-[#eeeeee] flex flex-col">
            <div className="h-[188px] pl-[17px] pt-[5px] flex flex-col">
              <div className="h-[60px] flex items-center"><RBulb /><span className="ml-[17px]"><Tri /></span><span className="ml-[18px]"><RHideOff /></span></div>
              <div className="h-[60px] flex items-center"><RPaint /><span className="ml-[12px]"><Tri /></span><span className="ml-[18px]"><RLines /></span></div>
              <div className="h-[60px] flex items-center"><RCopyM /></div>
            </div>
            <GroupLabel>View</GroupLabel>
          </div>
          <div className="w-[130px] bg-[#eeeeee] flex flex-col">
            <div className="h-[188px] pl-[13px] pt-[27px] flex flex-col">
              <div className="h-[44px] flex items-center"><RMeasure /><span className="ml-[26px]"><Tri /></span></div>
              <div className="mt-[27px] flex items-center"><RMeasure2 /><span className="ml-[24px]"><Tri /></span></div>
            </div>
            <GroupLabel>Measure</GroupLabel>
          </div>
          <div className="w-[188px] bg-[#eeeeee] flex flex-col">
            <div className="h-[188px] pl-[13px] pt-[12px] grid grid-cols-[89px_68px] grid-rows-[86px_76px]">
              <RBracketOff /><RBracket /><RFormOff /><RFlow />
            </div>
            <GroupLabel>Create</GroupLabel>
          </div>
          <div className="w-[105px] flex flex-col">
            <div className="h-[188px] bg-[#eeeeee] flex flex-col items-center pt-[13px]">
              <REdit />
              <span className="mt-[18px]">Edit</span>
              <span className="mt-[12px]">Path</span>
            </div>
            <GroupLabel green>Mode</GroupLabel>
          </div>
          <div className="w-[240px] flex flex-col">
            <div className="h-[188px] bg-[#eeeeee] flex pl-[13px]">
              <div className="w-[116px] flex flex-col items-center pt-[13px] whitespace-nowrap">
                <RPick />
                <span className="mt-[16px]">Pick</span>
                <span className="mt-[12px]">New Host</span>
              </div>
              <div className="w-[116px] flex flex-col items-center pt-[13px] whitespace-nowrap">
                <RReset />
                <span className="mt-[16px]">Reset</span>
                <span className="mt-[12px]">Railing</span>
              </div>
            </div>
            <GroupLabel green>Tools</GroupLabel>
          </div>
          <div className="flex-1" />
        </div>
        <div className="h-[5px] bg-[#d5d8cd]" />
        <div className="h-[62px] bg-[#e6eed8] flex items-center pl-[19px] text-[#333]">Modify | Railings</div>
        <div className="h-[3px] bg-[#d5d8cd]" />

        {/* main */}
        <div className="h-[1310px] flex">
          {/* properties */}
          <div className="w-[775px] flex bg-white">
            <div className="w-[768px] flex flex-col">
              <div className="h-[49px] bg-[#eeeeee] flex items-center justify-between pl-[6px] pr-[7px] text-[#444]">
                <span>Properties</span>
                <svg width="24" height="24" viewBox="0 0 24 24" className="block"><path d="M2 1l20 22M22 1L2 23" stroke="#222" strokeWidth="3.5" /></svg>
              </div>
              <div className="h-[171px] bg-[#eeeeee] flex items-center pl-[10px] pt-[3px] border-t-2 border-[#dcdcdc]">
                <div className="w-[151px] h-[157px] shrink-0 bg-[#f0f0f0] border-2 border-[#d8d8d8]" />
                <div className="ml-[10px] flex flex-col gap-[12px] text-[#555]"><span>Railing</span><span>960mm</span></div>
                <span className="ml-auto mr-[7px]"><Tri c="#444" s={14} /></span>
              </div>
              <div className="h-[54px] bg-[#eeeeee] flex items-start pl-[4px]">
                <div className="w-[585px] h-[49px] bg-white flex items-center pl-[6px] pr-[12px] justify-between text-[#333]">
                  <span>Railings (1)</span>
                  <svg width="14" height="9" viewBox="0 0 14 9" className="block"><path d="M1 1l6 6 6-6" stroke="#888" strokeWidth="1.5" fill="none" /></svg>
                </div>
                <div className="ml-[14px] h-[49px] flex items-center gap-[9px] whitespace-nowrap">
                  <Sv w={28} h={32}><rect x="1" y="1" width="26" height="30" fill="#eee" stroke="#555" strokeWidth="2" /><path d="M14 1v30M1 15h26" stroke="#555" strokeWidth="2" /><rect x="16" y="18" width="9" height="11" fill="#2a5f9c" /></Sv>
                  <span>Edit Type</span>
                </div>
              </div>
              {PROPS.map((r, i) =>
                "h" in r ? (
                  <div key={i} className="h-[45.85px] bg-[#d9d9d9] flex items-center justify-between pl-[6px] pr-[12px] text-[#333]">
                    <span>{r.h}</span>
                    <svg width="12" height="16" viewBox="0 0 12 16" className="block"><path d="M1 7l5-5 5 5M1 14l5-5 5 5" stroke="#333" strokeWidth="2" fill="none" /></svg>
                  </div>
                ) : (
                  <div key={i} className="h-[45.85px] flex bg-white border-b-2 border-[#c9c9c9]">
                    <div className={`w-[372px] flex items-center pl-[21px] border-r-2 border-[#a8a8a8] ${r.dim ? "text-[#9a9a9a]" : "text-[#333]"}`}>{r.l}</div>
                    {r.focus ? (
                      <div className="w-[366px] ml-[1px] flex items-center pl-[2px] border-[3px] border-[#444] text-[#333]">{r.v}</div>
                    ) : (
                      <div className={`w-[367px] flex items-center pl-[6px] border-r-2 border-[#d4d4d4] ${r.dim ? "text-[#9a9a9a]" : "text-[#333]"}`}>{r.v}</div>
                    )}
                  </div>
                )
              )}
            </div>
            <div className="w-[7px] bg-[#dedede]" />
          </div>

          {/* canvas column */}
          <div className="w-[1932px] flex flex-col bg-[#eeeeee]">
            <div className="h-[49px] bg-[#cdcdcd] flex items-stretch pl-[6px]">
              {VTABS.map((t, i) => (
                <div key={i} className="w-[294px] flex items-center pl-[8px] gap-[18px] text-[#666]">
                  {t.home ? <Elev /> : <Cube />}<span>{t.t}</span>
                </div>
              ))}
              <div className="w-[299px] bg-white flex items-center pl-[11px] gap-[16px] font-semibold text-[#222]">
                <Elev dark /><span>North</span>
                <svg width="24" height="24" viewBox="0 0 24 24" className="ml-[105px] block shrink-0"><path d="M2 1l20 22M22 1L2 23" stroke="#222" strokeWidth="3.5" /></svg>
              </div>
              <div className="flex-1 flex items-center justify-end pr-[14px]"><QCustom /></div>
            </div>
            <div className="flex-1 flex relative">
              <div className="w-[5px] bg-[#dedede]" />
              <Drawing />
              <span className="absolute left-[444px] top-[259px] text-[46px] leading-none font-bold text-[#111] tracking-[0.3px] font-['Liberation_Serif',serif]">960 mm</span>
              <div className="absolute left-[1813px] top-[5px] w-[64px] h-[224px] bg-white border-[3px] border-[#c4c4c4] rounded-[6px] flex flex-col items-center">
                <span className="self-end mr-[6px] mt-[8px] w-[10px] h-[10px] rounded-full border-2 border-[#bbb]" />
                <span className="mt-[20px]"><Sv w={44} h={56}><rect x="2" y="2" width="32" height="36" rx="8" stroke="#aaa" strokeWidth="3" /><circle cx="18" cy="20" r="9" stroke="#aaa" strokeWidth="3" /><path d="M24 28l6 8" stroke="#aaa" strokeWidth="3" /></Sv></span>
                <span className="mt-[2px]"><Tri c="#888" /></span>
                <span className="mt-[6px] w-[48px] border-t-2 border-dotted border-[#bbb]" />
                <span className="mt-[14px]"><Sv w={32} h={32}><rect x="1" y="1" width="20" height="20" fill="#a8cf8e" /><circle cx="21" cy="21" r="6" stroke="#888" strokeWidth="2.5" fill="#fff" /><path d="M25 26l5 5" stroke="#888" strokeWidth="2.5" /></Sv></span>
                <span className="mt-[18px]"><Tri c="#888" /></span>
                <span className="self-end mr-[6px] mt-auto mb-[8px] w-[10px] h-[10px] rounded-full border-2 border-[#bbb]" />
              </div>
              <div className="flex-1 pl-[12px] pt-[674px]"><div className="w-[13px] h-[39px] bg-[#888]" /></div>
              <div className="w-[6px] bg-[#dedede]" />
            </div>
          </div>

          {/* project browser */}
          <div className="flex-1 min-w-0 flex flex-col bg-white overflow-hidden relative text-[#333] text-[27.8px]">
            <div className="h-[49px] bg-[#eeeeee] flex items-center pl-[2px] whitespace-nowrap text-[#444] overflow-hidden">Project Browser - 960 mm Handrails provided - Elevation: North</div>
            <svg width="532" height="1261" viewBox="0 0 532 1261" className="absolute left-0 top-[49px] block">
              <path d={TREE_LINES} stroke="#d5d5d5" strokeWidth="2" fill="none" />
            </svg>
            <div className="flex flex-col relative">
              {TREE.map((r, i) => (
                <div key={i} className="h-[42.15px] flex items-center whitespace-nowrap">
                  {r.lv === 0 && (
                    <>
                      <div className="w-[6px] shrink-0" />
                      <div className="w-[24px] shrink-0">{r.exp && <Exp open={r.exp === "-"} />}</div>
                      <div className="w-[49px] shrink-0 flex justify-end">{r.icon}</div>
                      <div className="w-[14px] shrink-0" />
                    </>
                  )}
                  {r.lv === 1 && (
                    <>
                      <div className="w-[54px] shrink-0" />
                      <Exp open={r.exp === "-"} />
                      <div className="w-[26px] shrink-0" />
                    </>
                  )}
                  {r.lv === 2 && <div className="w-[142px] shrink-0" />}
                  {r.bold ? (
                    <span className="font-bold text-[#111] bg-[#e3e3e3] px-[10px] py-[8px]">{r.t}</span>
                  ) : (
                    <span className={r.lv === 2 ? "pl-[10px]" : ""}>{r.t}</span>
                  )}
                </div>
              ))}
            </div>
          </div>
        </div>
        <div className="h-[2px] bg-black" />
        <div className="flex-1 bg-white" />
      </div>
    </div>
  );
}
